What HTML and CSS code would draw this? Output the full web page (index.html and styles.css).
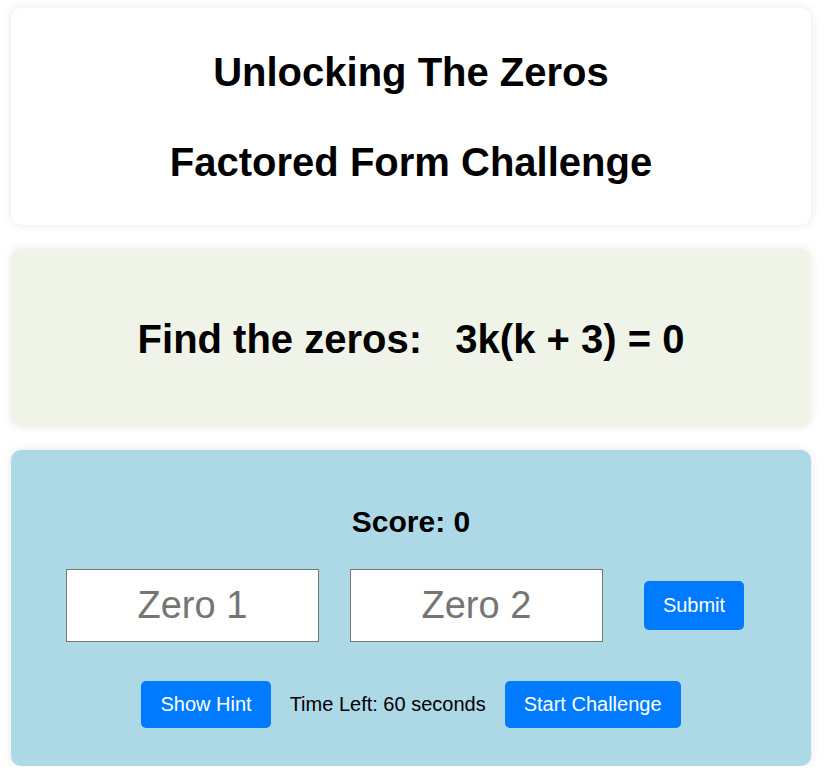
FILE: index.html
```html
<!DOCTYPE html>
<html lang="en">
<head>
<meta charset="utf-8">
<title>Unlocking The Zeros</title>
<link rel="stylesheet" href="styles.css">
</head>
<body>
<main class="page">
  <section class="card card-title">
    <h1 class="title">Unlocking The Zeros</h1>
    <h1 class="title title-second">Factored Form Challenge</h1>
  </section>
  <section class="card card-problem">
    <h2 class="problem">Find the zeros:&nbsp;&nbsp; 3k(k + 3) = 0</h2>
  </section>
  <section class="card card-play">
    <div class="score">Score: 0</div>
    <div class="answer-row">
      <input class="zero-input" type="text" placeholder="Zero 1">
      <input class="zero-input" type="text" placeholder="Zero 2">
      <button class="btn btn-submit">Submit</button>
    </div>
    <div class="control-row">
      <button class="btn">Show Hint</button>
      <span class="timer">Time Left: 60 seconds</span>
      <button class="btn">Start Challenge</button>
    </div>
  </section>
</main>
</body>
</html>
```
FILE: styles.css
```css
* {
  box-sizing: border-box;
}

body {
  margin: 0;
  background: #ffffff;
  font-family: "Liberation Sans", Arial, sans-serif;
  color: #000000;
}

.page {
  width: 800px;
  margin: 8px 0 0 11px;
  display: flex;
  flex-direction: column;
  gap: 24px;
}

.card {
  border-radius: 10px;
  box-shadow: 0 0 10px rgba(0, 0, 0, 0.1);
  text-align: center;
}

.card-title {
  background: #ffffff;
  padding: 41px 20px 40px;
}

.title {
  margin: 0;
  font-size: 40px;
  font-weight: bold;
  line-height: 46px;
}

.title-second {
  margin-top: 44px;
}

.card-problem {
  background: #f0f4e8;
  padding: 67px 20px 64px;
}

.problem {
  margin: 0;
  font-size: 40px;
  font-weight: bold;
  line-height: 46px;
}

.card-play {
  background: #add8e6;
  padding: 54px 20px 38px;
}

.score {
  font-size: 30px;
  font-weight: bold;
  line-height: 35px;
}

.answer-row {
  margin-top: 30px;
  display: flex;
  justify-content: center;
  align-items: center;
  padding-right: 12px;
}

.zero-input {
  width: 253px;
  height: 73px;
  margin: 0;
  padding: 0 10px;
  border: 1px solid #767676;
  border-radius: 0;
  background: #ffffff;
  font-family: "Liberation Sans", Arial, sans-serif;
  font-size: 38px;
  text-align: center;
  color: #000000;
}

.zero-input::placeholder {
  color: #757575;
}

.zero-input + .zero-input {
  margin-left: 31px;
}

.btn {
  margin: 0;
  border: none;
  border-radius: 5px;
  background: #007bff;
  color: #ffffff;
  font-family: "Liberation Sans", Arial, sans-serif;
  font-size: 20px;
  line-height: 23px;
  padding: 12px 19px;
  cursor: pointer;
}

.btn-submit {
  margin-left: 41px;
  padding: 13px 19px;
}

.control-row {
  margin-top: 39px;
  display: flex;
  justify-content: center;
  align-items: center;
  gap: 19px;
}

.timer {
  font-size: 20px;
  line-height: 23px;
}
```
